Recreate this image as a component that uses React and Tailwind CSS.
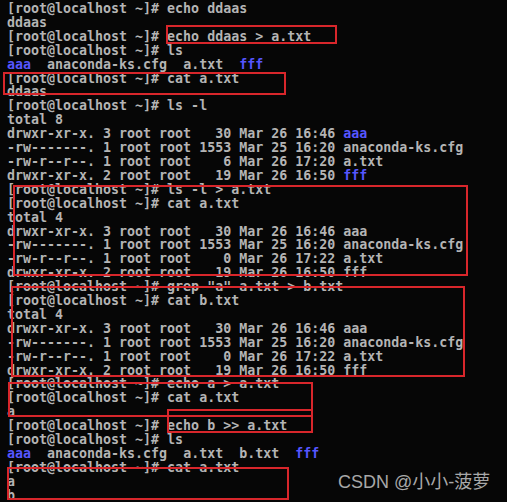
const P = "[root@localhost ~]# ";

const lines = [
  [P + "echo ddaas"],
  ["ddaas"],
  [P + "echo ddaas > a.txt"],
  [P + "ls"],
  [{ b: "aaa" }, "  anaconda-ks.cfg  a.txt  ", { b: "fff" }],
  [P + "cat a.txt"],
  ["ddaas"],
  [P + "ls -l"],
  ["total 8"],
  ["drwxr-xr-x. 3 root root   30 Mar 26 16:46 ", { b: "aaa" }],
  ["-rw-------. 1 root root 1553 Mar 25 16:20 anaconda-ks.cfg"],
  ["-rw-r--r--. 1 root root    6 Mar 26 17:20 a.txt"],
  ["drwxr-xr-x. 2 root root   19 Mar 26 16:50 ", { b: "fff" }],
  [P + "ls -l > a.txt"],
  [P + "cat a.txt"],
  ["total 4"],
  ["drwxr-xr-x. 3 root root   30 Mar 26 16:46 aaa"],
  ["-rw-------. 1 root root 1553 Mar 25 16:20 anaconda-ks.cfg"],
  ["-rw-r--r--. 1 root root    0 Mar 26 17:22 a.txt"],
  ["drwxr-xr-x. 2 root root   19 Mar 26 16:50 fff"],
  [P + 'grep "a" a.txt > b.txt'],
  [P + "cat b.txt"],
  ["total 4"],
  ["drwxr-xr-x. 3 root root   30 Mar 26 16:46 aaa"],
  ["-rw-------. 1 root root 1553 Mar 25 16:20 anaconda-ks.cfg"],
  ["-rw-r--r--. 1 root root    0 Mar 26 17:22 a.txt"],
  ["drwxr-xr-x. 2 root root   19 Mar 26 16:50 fff"],
  [P + "echo a > a.txt"],
  [P + "cat a.txt"],
  ["a"],
  [P + "echo b >> a.txt"],
  [P + "ls"],
  [{ b: "aaa" }, "  anaconda-ks.cfg  a.txt  b.txt  ", { b: "fff" }],
  [P + "cat a.txt"],
  ["a"],
  ["b"],
];

// red annotation boxes drawn over the terminal
const boxes = [
  "left-[166px] top-[25px] w-[171px] h-[19px]",
  "left-[3px] top-[72px] w-[283px] h-[23px]",
  "left-[13px] top-[185px] w-[455px] h-[91px]",
  "left-[11px] top-[286px] w-[454px] h-[91px]",
  "left-[8px] top-[382px] w-[305px] h-[35px]",
  "left-[167px] top-[409px] w-[146px] h-[24px]",
  "left-[7px] top-[467px] w-[282px] h-[33px]",
];

export default function App() {
  return (
    <div className="relative w-[507px] h-[502px] overflow-hidden bg-[#060606]">
      <div className="pl-[7px] pt-[2px] font-['DejaVu_Sans_Mono',monospace] font-bold text-[13.3px] leading-[13.9px] text-[#b4b4b4] whitespace-pre">
        {lines.map((parts, i) => (
          <div key={i}>
            {parts.map((p, j) =>
              typeof p === "string" ? (
                <span key={j}>{p}</span>
              ) : (
                <span key={j} className="text-[#5656ff]">
                  {p.b}
                </span>
              )
            )}
          </div>
        ))}
      </div>

      {boxes.map((b, i) => (
        <div key={i} className={"absolute border-2 border-[#d8262b] " + b} />
      ))}

      <div className="absolute left-[338px] top-[470px] font-['Liberation_Sans','Noto_Sans_CJK_SC',sans-serif] text-[18px] leading-[24px] text-[#a8a8a8]">
        CSDN @小小-菠萝
      </div>
    </div>
  );
}
